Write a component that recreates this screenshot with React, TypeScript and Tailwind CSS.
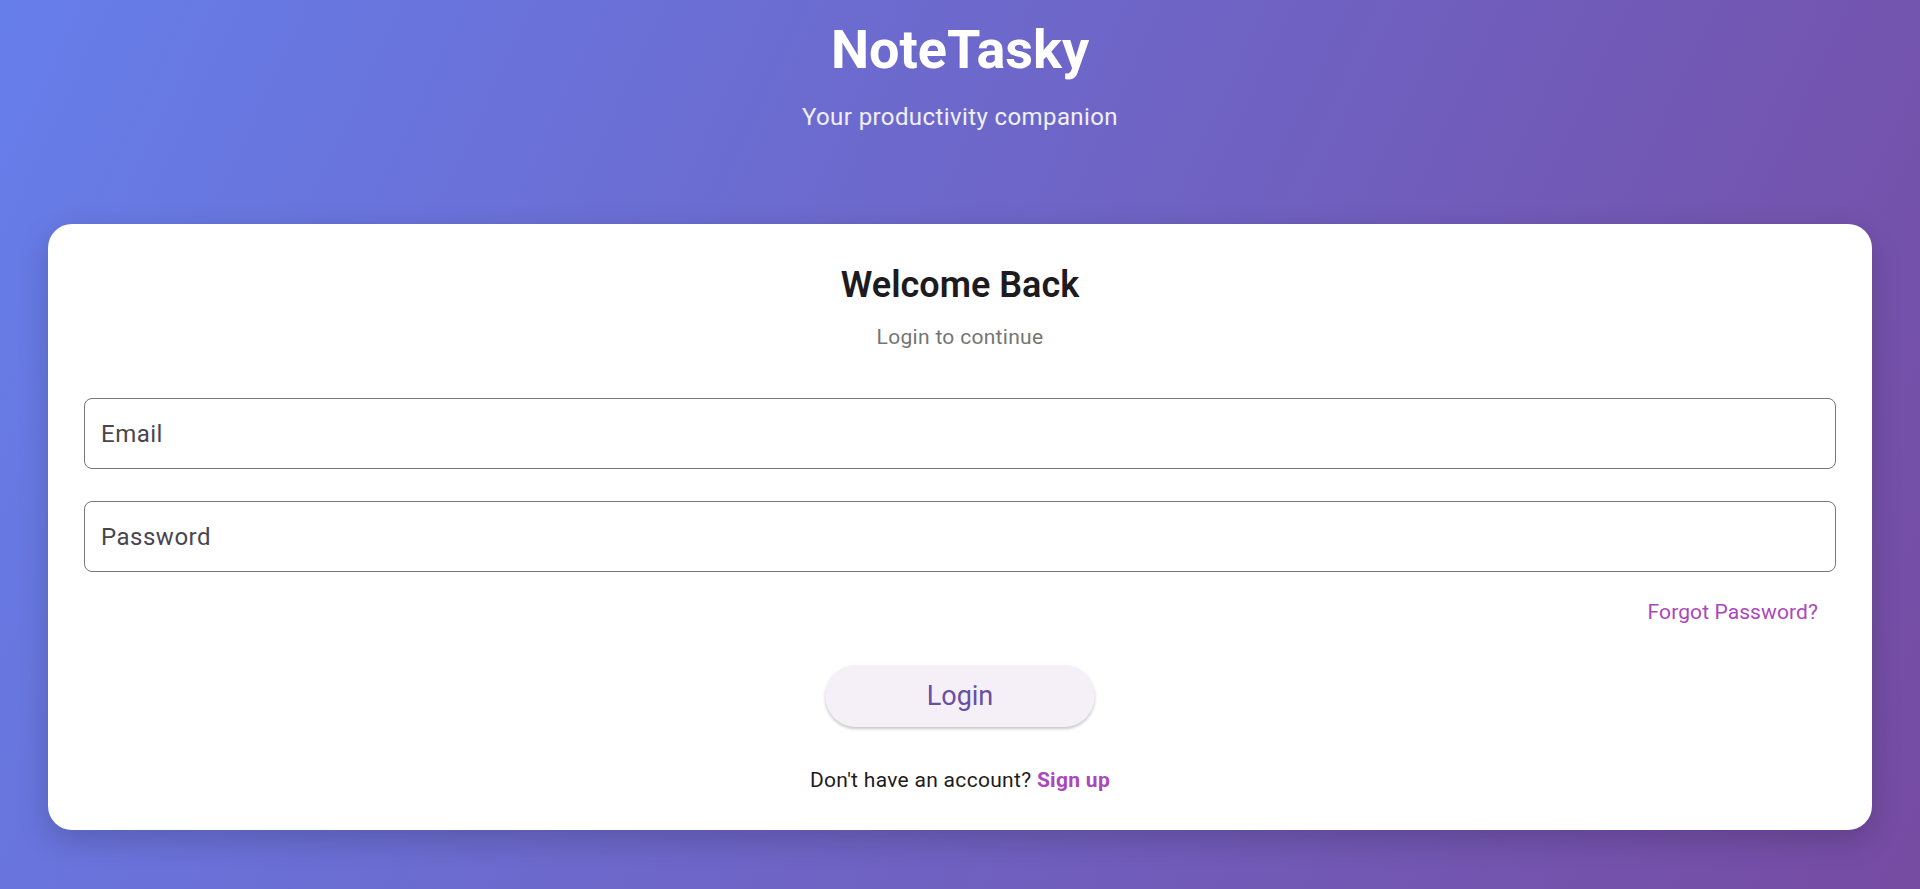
import React from 'react';

const Field: React.FC<{ label: string; type?: string }> = ({ label, type = 'text' }) => (
  <div className="h-[71px] w-full rounded-[8px] border border-[#79747e] flex items-center px-[16px]">
    <input
      type={type}
      placeholder={label}
      className="w-full bg-transparent outline-none text-[24px] leading-[32px] tracking-[0.5px] text-[#1d1b20] placeholder:text-[#49454f]"
    />
  </div>
);

export default function App() {
  return (
    <div
      className="min-h-screen w-full bg-[linear-gradient(115deg,#667eea,#764ba2)] pt-[18px] pb-[59px]"
      style={{ fontFamily: 'Roboto, "Noto Sans", sans-serif' }}
    >
      <header className="flex flex-col items-center">
        <h1 className="text-[54px] leading-[64px] font-bold text-white">NoteTasky</h1>
        <p className="mt-[19px] text-[24px] leading-[32px] tracking-[0.4px] text-white/90">Your productivity companion</p>
      </header>

      <main className="mx-[48px] mt-[91px] rounded-[24px] bg-white px-[36px] pt-[39px] pb-[36px] shadow-[0_10px_30px_rgba(0,0,0,0.18)]">
        <div className="flex flex-col items-center">
          <h2 className="text-[36px] leading-[44px] font-semibold text-[#1d1b20]">Welcome Back</h2>
          <p className="mt-[16px] text-[21px] leading-[28px] tracking-[0.3px] text-[#757575]">Login to continue</p>
        </div>

        <form className="mt-[47px] flex flex-col gap-[32px]" onSubmit={(e) => e.preventDefault()}>
          <Field label="Email" type="email" />
          <Field label="Password" type="password" />
        </form>

        <div className="mt-[26px] flex justify-end pr-[18px]">
          <button className="text-[21px] leading-[28px] text-[#ab47bc] tracking-[0.1px]">Forgot Password?</button>
        </div>

        <div className="mt-[39px] flex justify-center">
          <button className="h-[62px] w-[270px] rounded-full bg-[#f5eff7] text-[27px] leading-[36px] text-[#6750a4] shadow-[0_2px_3px_rgba(0,0,0,0.22)]">
            Login
          </button>
        </div>

        <p className="mt-[39px] text-center text-[21px] leading-[28px] text-[#1d1b20] tracking-[0.3px]">
          Don't have an account? <span className="font-bold text-[#ab47bc]">Sign up</span>
        </p>
      </main>
    </div>
  );
}
